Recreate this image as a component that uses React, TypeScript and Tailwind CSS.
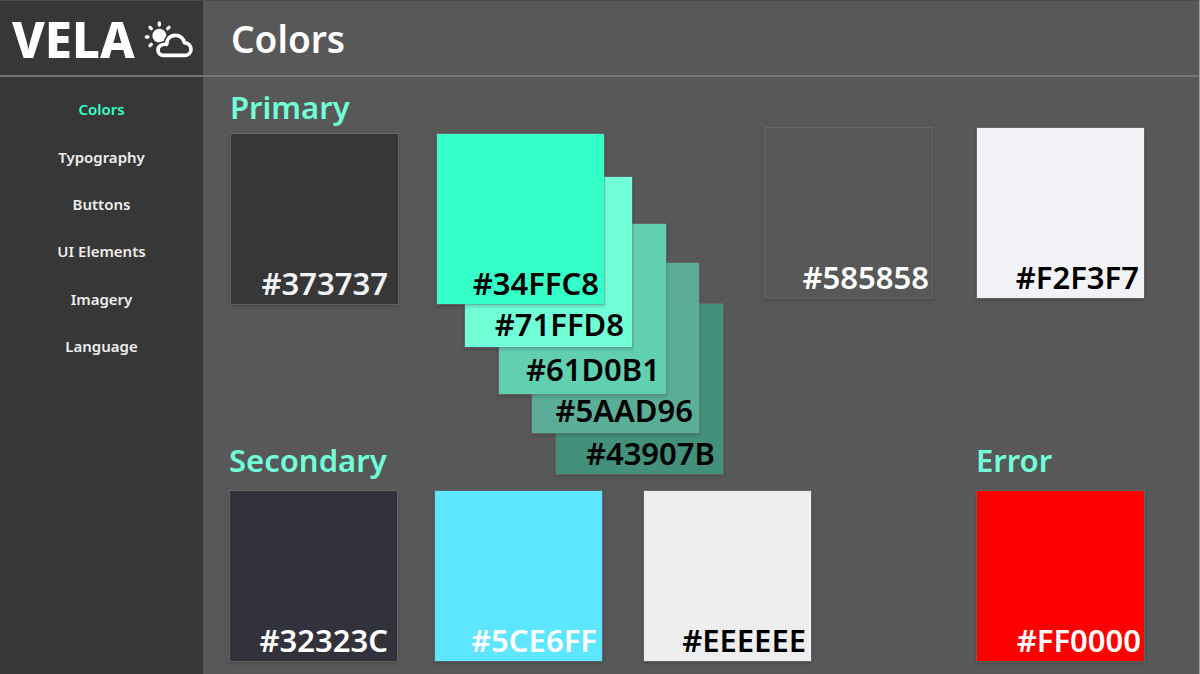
const navItems = ["Colors", "Typography", "Buttons", "UI Elements", "Imagery", "Language"];

type SwatchProps = {
  hex: string;
  className: string;
};

function Swatch({ hex, className }: SwatchProps) {
  return (
    <div
      className={`flex h-[172px] w-[169px] items-end justify-end border border-[#808080]/40 bg-clip-padding text-[31px] leading-9 font-semibold shadow-[0_2px_3px_rgba(0,0,0,0.15)] ${className}`}
    >
      {hex}
    </div>
  );
}

function PartlyCloudy() {
  const cloud =
    "M86 136 H150 C161 136 168 128 168 118 C168 107 160 99 148 98 C145 84 134 76 121 76 C106 76 95 87 95 103 C80 101 69 108 69 120 C69 130 76 136 86 136 Z";
  return (
    <svg viewBox="27 30 150 114" className="h-[38px] w-[50px] shrink-0" fill="none" aria-hidden="true">
      <circle cx="73" cy="77" r="21" fill="#fff" />
      <g stroke="#fff" strokeWidth="10" strokeLinecap="round">
        <path d="M73 39V45M98 56L102 52M49 56L45 52M34 81H39M49 103L45 107" />
      </g>
      <path d={cloud} fill="#373737" stroke="#373737" strokeWidth="20" strokeLinejoin="round" />
      <path d={cloud} stroke="#fff" strokeWidth="11" strokeLinejoin="round" />
    </svg>
  );
}

export default function App() {
  return (
    <div className="flex min-h-screen flex-col border-r border-[#a0a0a0] bg-[#585858] font-['Noto_Sans',sans-serif] text-white">
      <header className="flex h-[77px] border-t border-b-2 border-t-[#4b4b4b] border-b-[#757575]">
        <div className="flex w-[203px] shrink-0 items-center gap-[9px] bg-[#373737] pt-0.5 pl-3">
          <span className="text-[49px] leading-none font-extrabold">VELA</span>
          <PartlyCloudy />
        </div>
        <h1 className="flex items-center pt-0.5 pl-7 text-[37px] font-semibold">Colors</h1>
      </header>

      <div className="flex grow">
        <nav className="w-[203px] shrink-0 bg-[#373737] pt-[9px]">
          <ul className="grid h-[284px] grid-rows-6">
            {navItems.map((item) => (
              <li key={item} className="grid">
                <a
                  href={`#${item}`}
                  aria-current={item === "Colors" ? "page" : undefined}
                  className={`flex items-center justify-center text-[15px] font-semibold ${
                    item === "Colors" ? "text-[#34ffc8]" : "text-[#eeeeee]"
                  }`}
                >
                  {item}
                </a>
              </li>
            ))}
          </ul>
        </nav>

        <main className="grow pt-2.5 pb-3">
          <section className="pl-[27px]">
            <h2 className="text-[31px] leading-10 font-semibold text-[#71ffd8]">Primary</h2>
            <div className="grid h-[313px] grid-cols-[206fr_328fr_212fr_223fr] items-start">
              <div className="pt-1.5">
                <Swatch hex="#373737" className="bg-[#373737] pr-2.5 pb-[3px] text-[#f2f3f7]" />
              </div>
              <div className="relative mt-1.5 text-black">
                <Swatch hex="#43907B" className="absolute top-[170px] left-[119px] bg-[#43907b] pr-2 pb-[3px]" />
                <Swatch hex="#5AAD96" className="absolute top-[129px] left-[95px] bg-[#5aad96] pr-1.5 pb-[5px]" />
                <Swatch hex="#61D0B1" className="absolute top-[90px] left-[62px] bg-[#61d0b1] pr-1.5 pb-[7px]" />
                <Swatch hex="#71FFD8" className="absolute top-[43px] left-7 bg-[#71ffd8] pr-2 pb-[5px]" />
                <Swatch hex="#34FFC8" className="absolute top-0 left-0 bg-[#34ffc8] pr-[5px] pb-[3px]" />
              </div>
              <Swatch hex="#585858" className="bg-[#585858] pr-[3px] pb-[3px]" />
              <Swatch hex="#F2F3F7" className="bg-[#f2f3f7] pr-[5px] pb-[3px] text-black" />
            </div>
          </section>

          <div className="grid grid-cols-[747fr_223fr] pl-[26px]">
            <section>
              <h2 className="text-[31px] leading-10 font-semibold text-[#71ffd8]">Secondary</h2>
              <div className="mt-2.5 grid grid-cols-[205fr_209fr_333fr]">
                <Swatch hex="#32323C" className="bg-[#32323c] pr-[9px] pb-[3px]" />
                <Swatch hex="#5CE6FF" className="bg-[#5ce6ff] pr-[5px] pb-[3px]" />
                <Swatch hex="#EEEEEE" className="bg-[#eeeeee] pr-[5px] pb-[3px] text-black" />
              </div>
            </section>
            <section>
              <h2 className="text-[31px] leading-10 font-semibold text-[#71ffd8]">Error</h2>
              <div className="mt-2.5">
                <Swatch hex="#FF0000" className="bg-[#ff0000] pr-[3px] pb-[3px]" />
              </div>
            </section>
          </div>
        </main>
      </div>
    </div>
  );
}
